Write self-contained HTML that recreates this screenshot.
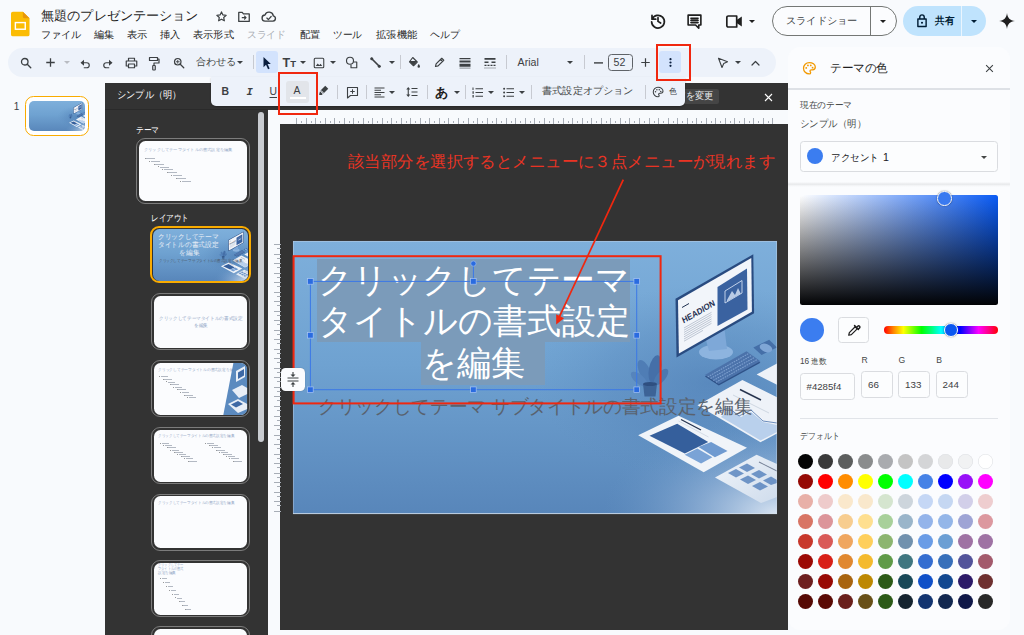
<!DOCTYPE html>
<html lang="ja">
<head>
<meta charset="utf-8">
<title>無題のプレゼンテーション - Google スライド</title>
<style>
*{box-sizing:border-box;margin:0;padding:0}
html,body{width:1024px;height:635px;overflow:hidden}
body{position:relative;background:#f8fafd;font-family:"Liberation Sans",sans-serif;color:#1f1f1f;font-size:10px}
.abs{position:absolute}
.t{position:absolute;white-space:nowrap;line-height:1}
.st text{font-family:"Liberation Sans",sans-serif}
svg{position:absolute;overflow:visible}
/* header */
#doc-title{left:40px;top:9px;font-size:13.2px;color:#1f1f1f}
.menu{top:30px;font-size:10.2px;color:#1f1f1f}
.menu.dis{color:#a9adb3}
/* toolbar */
#toolbar{left:7.5px;top:47.6px;width:768.5px;height:29.2px;border-radius:15px;background:#edf2fa}
.tsep{position:absolute;width:1px;height:14px;top:55px;background:#c7cad1}
.tsep2{position:absolute;width:1px;height:14px;top:85px;background:#c7cad1}
.ico{stroke:#3c4043;fill:none;stroke-width:1.3;stroke-linecap:round;stroke-linejoin:round}
.fil{fill:#3c4043;stroke:none}
.dd{position:absolute;width:0;height:0;border-left:3px solid transparent;border-right:3px solid transparent;border-top:3.2px solid #3c4043}
/* theme panel */
#tp{left:105px;top:83px;width:163px;height:552px;background:#333333}
#tphead{left:105px;top:82.800px;width:683px;height:26.800px;background:#333333}
.thumb{position:absolute;left:151.5px;width:98px;height:57px;border:1px solid #777;border-radius:9px}
.thumb i{position:absolute;left:1.5px;top:1.5px;right:1.5px;bottom:1.5px;background:#fbfcfe;border-radius:7px;overflow:hidden;display:block}
.tl{position:absolute;left:0;right:0;text-align:center;font-size:3.4px;color:#8fa3c0;line-height:4.2px;white-space:nowrap}
.bl{position:absolute;height:1px;background:#8b93a3;opacity:.75}
/* right panel */
#rp{left:788px;top:47px;width:222px;height:583px;background:#fbfcfe;border-radius:12px}
.box{position:absolute;border:1px solid #dadce0;border-radius:3px;background:#fcfdfe}
.sw{position:absolute;width:15.4px;height:15.4px;border-radius:50%}
.lbl{font-size:8.6px;color:#444746}
.val{font-size:9.8px;color:#3c4043}
</style>
</head>
<body>
<!--ART-->
<svg width="0" height="0" style="left:0;top:0">
<defs>
<linearGradient id="sbg" x1="0" y1="0" x2="0" y2="1">
  <stop offset="0" stop-color="#7eafdb"/><stop offset="0.45" stop-color="#6fa2d1"/><stop offset="1" stop-color="#5886ba"/>
</linearGradient>
<radialGradient id="sglow" cx="1" cy="1" r="0.36">
  <stop offset="0" stop-color="#dfe9f5" stop-opacity=".95"/><stop offset="0.5" stop-color="#a9c3e2" stop-opacity=".45"/><stop offset="1" stop-color="#6a98c9" stop-opacity="0"/>
</radialGradient>
<radialGradient id="sdesk" cx="0.86" cy="0.52" r="0.36">
  <stop offset="0" stop-color="#4a78b0" stop-opacity=".55"/><stop offset="0.6" stop-color="#4f7db4" stop-opacity=".25"/><stop offset="1" stop-color="#5b8abd" stop-opacity="0"/>
</radialGradient>
<linearGradient id="fadeR" x1="0" y1="0" x2="1" y2="1">
  <stop offset="0" stop-color="#f1f5fa"/><stop offset="1" stop-color="#cfdcec"/>
</linearGradient>
<symbol id="art" viewBox="0 0 484 273" preserveAspectRatio="none">
  <rect width="484" height="273" fill="url(#sbg)"/>
  <!-- darker desk zone on the right -->
  <rect width="484" height="273" fill="url(#sdesk)"/>
  <rect width="484" height="273" fill="url(#sglow)"/>
  <!-- plant -->
  <ellipse cx="352" cy="131" rx="5.500" ry="13" fill="#4f7db5" transform="rotate(-25 352 131)"/>
  <ellipse cx="362" cy="128" rx="6" ry="14" fill="#456fa8" transform="rotate(12 362 128)"/>
  <ellipse cx="346" cy="138" rx="4.500" ry="10" fill="#5684bc" transform="rotate(-50 346 138)"/>
  <ellipse cx="368" cy="136" rx="4.500" ry="10" fill="#4b78b0" transform="rotate(40 368 136)"/>
  <path d="M350 143h14l-1.500 12.500h-11z" fill="#3d6396"/>
  <ellipse cx="357" cy="143" rx="7" ry="2" fill="#2f4f80"/>
  <!-- monitor -->
  <ellipse cx="423" cy="111" rx="17" ry="7.500" fill="#8db4df"/>
  <polygon points="411,92 431,84 434,108 416,110" fill="#7ea8d8"/>
  <polygon points="382.500,57.800 460.300,13.200 461.100,72.300 383.500,116.500" fill="#294b80"/>
  <polygon points="385,59.300 458.300,17 458.900,70.800 385.900,112.600" fill="#f2f5fa"/>
  <polygon points="424.500,45.900 454,27.500 454.500,68.600 424.500,85" fill="#3a62a0"/>
  <polygon points="432,50 449,39.500 449,52 432,62" fill="none" stroke="#cfdcf0" stroke-width="0.900"/>
  <polygon points="434,59 439,50 442,54 445,47 448,53 448,52.500 434,60.500" fill="#b9cbe6"/>
  <g transform="translate(390.500,82.600) rotate(-30) skewX(-8)">
    <text x="0" y="0" font-family="Liberation Sans, sans-serif" font-weight="bold" font-size="8.500" fill="#1f3050" textLength="37" lengthAdjust="spacingAndGlyphs">HEADION</text>
  </g>
  <g stroke="#9aa6b8" stroke-width="0.600">
    <path d="M391 87L418.500 71.300M391 89.200L418.500 73.500M391 91.400L418.500 75.700M391 93.600L418.500 77.900M391 95.800L418.500 80.100M391 98L418.500 82.300M391 100.200L410 89.400"/>
  </g>
  <path d="M389 66.500l7-4" stroke="#1f3050" stroke-width="1"/>
  <!-- keyboard -->
  <polygon points="411.900,135.600 453.500,111.700 467.400,121.700 425.800,144.400" fill="#2f5288"/>
  <polygon points="411.900,134.100 453.500,110.200 467.400,120.200 425.800,142.900" fill="#4b72aa"/>
  <g stroke="#86a8d6" stroke-width="1.100" stroke-dasharray="1.6 0.9" opacity=".85">
    <path d="M414.700,135.900L456.300,112.200M417.500,137.600L459.100,114.200M420.300,139.400L461.900,116.200M423,141.200L464.600,118.200"/>
  </g>
  <!-- mouse -->
  <polygon points="460.300,106.400 476.200,98.800 484,106.400 468.600,113.900" fill="#456fa8"/>
  <ellipse cx="473" cy="107" rx="6.500" ry="4" fill="#7fa6d6" transform="rotate(20 473 107)"/>
  <!-- paper top right -->
  <polygon points="463.600,133.500 484,122.400 484,143.700" fill="#eef2f8"/>
  <!-- paper A (chart) -->
  <polygon points="449.400,139 404.500,164.200 467.500,201.200 484,192.500 484,156.300" fill="#eef2f8"/>
  <polygon points="436,168 448,176 458,171 470,181 484,184 484,191 467.500,199.500 440,183 428,176" fill="#b9d0ec"/>
  <path d="M424 171l12-4 10 8 12-6 12 11 14 2" stroke="#4a74ad" stroke-width="0.800" fill="none"/>
  <path d="M447 148.500l21 10.500" stroke="#27344f" stroke-width="1.400"/>
  <path d="M440 154l36 18" stroke="#b8c2d2" stroke-width="0.600"/>
  <!-- paper B (slide deck) -->
  <polygon points="385.500,174.700 345.200,194.300 410.700,231.300 454,206.700" fill="#f0f4f9"/>
  <polygon points="384.200,182.700 356.500,194.800 391.800,212.400 415.200,201.100" fill="#355f9c"/>
  <polygon points="405.500,206.100 418.100,201.100 434.500,209.900 421.900,216.200" fill="#6f9ad0"/>
  <polygon points="391.700,213.700 404.300,207.400 419.400,216.200 408.100,222.500" fill="#7aa3d6"/>
  <path d="M388 178.500l20 10.500" stroke="#27344f" stroke-width="1.300"/>
  <path d="M385.500 180l30 16" stroke="#b8c2d2" stroke-width="0.500"/>
  <!-- paper C (bottom right, faded) -->
  <polygon points="463.600,213.700 422,236.400 468,262 484,256 484,223" fill="url(#fadeR)"/>
  <g fill="#5b86bf" opacity=".85">
    <polygon points="446,226.500 454,222.500 462,227 454,231"/>
    <polygon points="435,232 443,228 451,232.500 443,236.500"/>
    <polygon points="458,233 466,229 474,233.500 466,237.500"/>
    <polygon points="447,238.500 455,234.500 463,239 455,243"/>
    <polygon points="470,239.500 478,235.500 484,239 484,242 478,244"/>
    <polygon points="459,245 467,241 475,245.500 467,249.500"/>
  </g>
  <path d="M466 221l18 9" stroke="#5b6880" stroke-width="1.100" opacity=".8"/>
</symbol>
</defs>
</svg>
<!--/ART-->
<!-- ===== Header ===== -->
<svg style="left:10.5px;top:10.5px" width="19" height="26" viewBox="0 0 20 27">
  <path d="M2 0.5H12.5L19.5 7.5V24.5a2 2 0 0 1-2 2H2a2 2 0 0 1-2-2V2.5a2 2 0 0 1 2-2z" fill="#fbbc04"/>
  <path d="M12.5 0.5L19.5 7.5H14.5a2 2 0 0 1-2-2z" fill="#e8960a"/>
  <rect x="4.6" y="12" width="10.4" height="7" fill="none" stroke="#fff" stroke-width="1.5"/>
</svg>
<svg class="st" style="left:40.5px;top:4.9px" width="157.5" height="19.8"><text x="0" y="14.8" font-size="13.2" fill="#1f1f1f" textLength="157.5" lengthAdjust="spacingAndGlyphs">無題のプレゼンテーション</text></svg>
<svg class="st" style="left:41.0px;top:26.5px" width="40.6" height="15.3"><text x="0" y="11.4" font-size="10.2" fill="#1f1f1f" textLength="40.6" lengthAdjust="spacingAndGlyphs">ファイル</text></svg>
<svg class="st" style="left:94.3px;top:26.5px" width="20.3" height="15.3"><text x="0" y="11.4" font-size="10.2" fill="#1f1f1f" textLength="20.3" lengthAdjust="spacingAndGlyphs">編集</text></svg>
<svg class="st" style="left:127.0px;top:26.5px" width="20.5" height="15.3"><text x="0" y="11.4" font-size="10.2" fill="#1f1f1f" textLength="20.5" lengthAdjust="spacingAndGlyphs">表示</text></svg>
<svg class="st" style="left:160.2px;top:26.5px" width="20.5" height="15.3"><text x="0" y="11.4" font-size="10.2" fill="#1f1f1f" textLength="20.5" lengthAdjust="spacingAndGlyphs">挿入</text></svg>
<svg class="st" style="left:193.2px;top:26.5px" width="40.8" height="15.3"><text x="0" y="11.4" font-size="10.2" fill="#1f1f1f" textLength="40.8" lengthAdjust="spacingAndGlyphs">表示形式</text></svg>
<svg class="st" style="left:247.3px;top:26.5px" width="38.9" height="15.3"><text x="0" y="11.4" font-size="10.2" fill="#a9adb3" textLength="38.9" lengthAdjust="spacingAndGlyphs">スライド</text></svg>
<svg class="st" style="left:299.8px;top:26.5px" width="20.6" height="15.3"><text x="0" y="11.4" font-size="10.2" fill="#1f1f1f" textLength="20.6" lengthAdjust="spacingAndGlyphs">配置</text></svg>
<svg class="st" style="left:333.3px;top:26.5px" width="29.2" height="15.3"><text x="0" y="11.4" font-size="10.2" fill="#1f1f1f" textLength="29.2" lengthAdjust="spacingAndGlyphs">ツール</text></svg>
<svg class="st" style="left:375.8px;top:26.5px" width="41.2" height="15.3"><text x="0" y="11.4" font-size="10.2" fill="#1f1f1f" textLength="41.2" lengthAdjust="spacingAndGlyphs">拡張機能</text></svg>
<svg class="st" style="left:429.8px;top:26.5px" width="29.7" height="15.3"><text x="0" y="11.4" font-size="10.2" fill="#1f1f1f" textLength="29.7" lengthAdjust="spacingAndGlyphs">ヘルプ</text></svg>
<!-- title icons -->
<svg style="left:214.500px;top:10px" width="13" height="13" viewBox="0 0 24 24"><path class="ico" style="stroke-width:2.2" d="M12 3.5l2.6 5.6 6 .7-4.5 4.1 1.2 6L12 16.9 6.700 19.900l1.200-6L3.400 9.800l6-.7z"/></svg>
<svg style="left:237px;top:10px" width="14" height="13" viewBox="0 0 24 22"><path class="ico" style="stroke-width:2.2" d="M3 4h6l2 2.500h10v13H3z"/><path class="ico" style="stroke-width:2" d="M9 13h6M13 10.500l2.500 2.500-2.500 2.500"/></svg>
<svg style="left:260.500px;top:10px" width="16" height="13" viewBox="0 0 26 20"><path class="ico" style="stroke-width:2.200" d="M7 17.500a5 5 0 0 1-.5-10A7 7 0 0 1 20 9a4.300 4.300 0 0 1-.5 8.500z"/><path class="ico" style="stroke-width:2" d="M9.500 12.500l2.500 2.500 4.500-5"/></svg>

<!-- header right -->
<svg style="left:649px;top:12px" width="18" height="18" viewBox="0 0 24 24"><path class="ico" style="stroke-width:2.300;stroke:#1f1f1f" d="M4.200 9.500A8.500 8.500 0 1 1 3.500 13M4 4.500v5h5M12 7.500v5l3.500 2.200"/></svg>
<svg style="left:686px;top:13px" width="17" height="17" viewBox="0 0 24 24"><path class="ico" style="stroke-width:2.300;stroke:#1f1f1f" d="M3 3h18v14H18v4.500L13.500 17H3zM7 7.500h10M7 10.500h10M7 13.500h10"/></svg>
<svg style="left:725px;top:14px" width="19" height="15" viewBox="0 0 26 20"><path class="ico" style="stroke-width:2.300;stroke:#1f1f1f" d="M4.500 2.500h11.500v15H4.500a2 2 0 0 1-2-2V4.500a2 2 0 0 1 2-2z"/><path d="M16 8l7-5v14l-7-5z" fill="#1f1f1f"/></svg>
<div class="dd" style="left:748.500px;top:20px;border-top-color:#1f1f1f"></div>

<div class="abs" style="left:772px;top:6px;width:125px;height:30px;border:1px solid #747775;border-radius:15px;background:#fbfcfe"></div>
<div class="abs" style="left:870px;top:7px;width:1px;height:28px;background:#747775"></div>
<div class="dd" style="left:879.500px;top:20px;border-top-color:#1f1f1f"></div>

<div class="abs" style="left:902.500px;top:6.300px;width:83.500px;height:29.500px;border-radius:15px;background:#bfe3fd"></div>
<div class="abs" style="left:961.200px;top:6px;width:1px;height:30px;background:#eaf5fe"></div>
<svg style="left:916px;top:13px" width="12" height="15" viewBox="0 0 16 20"><path class="ico" style="stroke-width:1.900;stroke:#001d35" d="M2.500 8h11v10h-11zM5 8V5.500a3 3 0 0 1 6 0V8"/><circle cx="8" cy="13" r="1.400" fill="#001d35"/></svg>
<div class="dd" style="left:970.500px;top:20px;border-top-color:#001d35"></div>
<svg style="left:999px;top:13px" width="16" height="16" viewBox="0 0 24 24"><path d="M12 0C12.800 7.500 16.500 11.200 24 12C16.500 12.800 12.800 16.500 12 24C11.200 16.500 7.500 12.800 0 12C7.500 11.200 11.200 7.500 12 0z" fill="#1f1f1f"/></svg>


<svg class="st" style="left:786.1px;top:12.7px" width="71.5" height="15.3"><text x="0" y="11.4" font-size="10.2" fill="#3c4043" textLength="71.5" lengthAdjust="spacingAndGlyphs">スライドショー</text></svg>
<svg class="st" style="left:934.5px;top:12.7px" width="19.1" height="15.3"><text x="0" y="11.4" font-size="10.2" fill="#001d35" font-weight="bold" textLength="19.1" lengthAdjust="spacingAndGlyphs">共有</text></svg>
<!-- ===== Toolbar ===== -->
<div id="toolbar" class="abs"></div>
<svg style="left:20.4px;top:56.5px" width="12" height="12" viewBox="0 0 24 24"><circle class="ico" style="stroke-width:2.6" cx="9.500" cy="9.500" r="6.500"/><path class="ico" style="stroke-width:2.800" d="M14.500 14.500L21.500 21.500"/></svg>
<svg style="left:46.3px;top:58.0px" width="9" height="9" viewBox="0 0 18 18"><path class="ico" style="stroke-width:2.600;stroke-linecap:butt" d="M9 0.500v17M0.500 9h17"/></svg>
<div class="dd" style="left:64.0px;top:60.9px;border-top-color:#b9bcc2"></div>
<svg style="left:79.5px;top:57.5px" width="11" height="11" viewBox="0 0 22 22"><path class="ico" style="stroke-width:2.400" d="M4.500 9.500h9a5 5 0 0 1 0 10h-5"/><path class="fil" d="M8 3.500v12L1 9.500z"/></svg>
<svg style="left:102.3px;top:57.5px" width="11" height="11" viewBox="0 0 22 22"><path class="ico" style="stroke-width:2.400" d="M17.500 9.500h-9a5 5 0 0 0 0 10h5"/><path class="fil" d="M14 3.500v12l7-6z"/></svg>
<svg style="left:124.9px;top:56.5px" width="13" height="12" viewBox="0 0 26 24"><path class="ico" style="stroke-width:2.400" d="M7 8V2.500h12V8M7 18H2.500V8h21v10H19M7 14h12v7.500H7z"/></svg>
<svg style="left:148.3px;top:55.5px" width="12" height="15" viewBox="0 0 24 30"><path class="ico" style="stroke-width:2.400" d="M3 3h16v6H3zM19 6h3v8H12v5"/><rect class="ico" style="stroke-width:2.400" x="9.500" y="19" width="5" height="9" rx="1"/></svg>
<svg style="left:172.7px;top:56.5px" width="12" height="12" viewBox="0 0 24 24"><circle class="ico" style="stroke-width:2.400" cx="9.500" cy="9.500" r="6.500"/><path class="ico" style="stroke-width:2.600" d="M14.500 14.500L21.500 21.500"/><path class="ico" style="stroke-width:1.800" d="M9.500 6.500v6M6.500 9.500h6"/></svg>
<svg class="st" style="left:195.5px;top:54.2px" width="40.5" height="15.3"><text x="0" y="11.4" font-size="10.2" fill="#444746" textLength="40.5" lengthAdjust="spacingAndGlyphs">合わせる</text></svg>
<div class="dd" style="left:237.0px;top:60.9px"></div>
<div class="tsep" style="left:252.5px"></div>
<div class="abs" style="left:256px;top:51px;width:22px;height:22px;border-radius:3px;background:#d3e3fd"></div>
<svg style="left:262.0px;top:55.8px" width="10" height="14" viewBox="0 0 14 20"><path d="M2 1.500L12.500 11.500H7.800L10.800 17.800L8.500 18.800L5.600 12.600L2 16z" fill="#0b1f3f"/></svg>
<div class="t" style="left:282.5px;top:56.5px;font-size:12.5px;font-weight:bold;color:#3c4043">T</div>
<div class="t" style="left:290.2px;top:59.2px;font-size:9.5px;font-weight:bold;color:#3c4043">T</div>
<div class="dd" style="left:299.5px;top:60.9px"></div>
<svg style="left:312.8px;top:56.5px" width="12" height="12" viewBox="0 0 24 24"><rect class="ico" style="stroke-width:2.200" x="2.500" y="2.500" width="19" height="19" rx="2"/><path class="fil" d="M5.500 18l4-5 3 3.500 2.500-3 3.500 4.500z"/></svg>
<div class="dd" style="left:329.8px;top:60.9px"></div>
<svg style="left:344.9px;top:56.0px" width="13" height="13" viewBox="0 0 26 26"><circle class="ico" style="stroke-width:2.300" cx="10" cy="9.500" r="7"/><path class="ico" style="stroke-width:2.300" d="M18 12h5.500v11.500H12V18"/></svg>
<svg style="left:370.3px;top:57.0px" width="11" height="11" viewBox="0 0 22 22"><path class="ico" style="stroke-width:3.400" d="M3 3L19 19"/><circle class="fil" cx="3.500" cy="3.500" r="3"/><circle class="fil" cx="18.500" cy="18.500" r="3"/></svg>
<div class="dd" style="left:389.4px;top:60.9px"></div>
<div class="tsep" style="left:400.0px"></div>
<svg style="left:408.1px;top:56.0px" width="13" height="13" viewBox="0 0 26 26"><path class="ico" style="stroke-width:2.300" d="M9.500 3l9 9-7.500 7.500-8-8zM4 11h13"/><path class="fil" d="M3.500 11.500h14l-6.500 7z"/><path class="fil" d="M21.500 16s2.500 3 2.500 4.800a2.500 2.500 0 0 1-5 0c0-1.800 2.500-4.800 2.500-4.800z"/></svg>
<svg style="left:434.1px;top:57.0px" width="11" height="11" viewBox="0 0 22 22"><path class="ico" style="stroke-width:2.300" d="M3 19l1.200-5.200L15.500 2.500l4 4L8.200 17.800zM13 5l4 4"/></svg>
<svg style="left:459.0px;top:57.0px" width="12" height="12" viewBox="0 0 24 24"><path class="fil" d="M1 2h22v2.500H1zM1 7h22v4H1zM1 13.500h22v6H1z"/><path d="M1 21h22v2.500H1z" fill="#9aa0a6"/></svg>
<svg style="left:484.2px;top:57.0px" width="12" height="12" viewBox="0 0 24 24"><path class="fil" d="M1 2h22v3.500H1zM1 9h8v3H1zM15 9h8v3h-8zM1 15.500h4v2.500H1zM7 15.500h4v2.500H7zM13 15.500h4v2.500h-4zM19 15.500h4v2.500h-4z"/><path d="M1 21h2v2H1zM5 21h2v2H5zM9 21h2v2H9zM13 21h2v2h-2zM17 21h2v2h-2zM21 21h2v2h-2z" fill="#5f6368"/></svg>
<div class="tsep" style="left:505.5px"></div>
<div class="t" style="left:517.6px;top:57.2px;font-size:10.6px;color:#3c4043">Arial</div>
<div class="dd" style="left:566.5px;top:60.9px"></div>
<div class="tsep" style="left:584.2px"></div>
<svg style="left:593.5px;top:61.5px" width="9" height="2" viewBox="0 0 9 2"><rect class="fil" x="0" y="0.200" width="9" height="1.400"/></svg>
<div class="abs" style="left:607.5px;top:53.500px;width:25px;height:17.500px;border:1px solid #5f6368;border-radius:3.500px"></div>
<div class="t" style="left:613.6px;top:57.2px;font-size:10.6px;color:#3c4043">52</div>
<svg style="left:640.8px;top:58.0px" width="9" height="9" viewBox="0 0 18 18"><path class="ico" style="stroke-width:2.400;stroke-linecap:butt" d="M9 0.500v17M0.500 9h17"/></svg>
<div class="abs" style="left:659.300px;top:51px;width:21.800px;height:22px;border-radius:3px;background:#d3e3fd"></div>
<svg style="left:668.9px;top:57.4px" width="3" height="11" viewBox="0 0 3 11"><circle cx="1.500" cy="2.200" r="1.100" fill="#0b1f3f"/><circle cx="1.500" cy="5.500" r="1.100" fill="#0b1f3f"/><circle cx="1.500" cy="8.800" r="1.100" fill="#0b1f3f"/></svg>
<svg style="left:716.6px;top:57.0px" width="12" height="12" viewBox="0 0 24 24"><path class="ico" style="stroke-width:2.200" d="M3 2.500L21 9.500L13.500 13L10 21z"/></svg>
<div class="dd" style="left:735.0px;top:61.4px"></div>
<svg style="left:751.0px;top:60.0px" width="9" height="6" viewBox="0 0 18 12"><path class="ico" style="stroke-width:2.400" d="M2 10L9 3l7 7"/></svg>
<!-- ===== Theme builder panel ===== -->
<div id="tphead" class="abs"></div>
<div id="tp" class="abs"></div>
<div class="abs" style="left:105px;top:109px;width:163px;height:1px;background:#2a2a2a"></div>
<div class="abs" style="left:258.2px;top:112px;width:6px;height:330px;background:#c9ccd1;border-radius:3px"></div>
<svg class="st" style="left:135.7px;top:122.6px" width="23.2" height="13.0"><text x="0" y="9.7" font-size="8.7" fill="#fff" textLength="23.2" lengthAdjust="spacingAndGlyphs">テーマ</text></svg>
<svg class="st" style="left:151.3px;top:211.0px" width="38.0" height="13.0"><text x="0" y="9.7" font-size="8.7" fill="#fff" textLength="38.0" lengthAdjust="spacingAndGlyphs">レイアウト</text></svg>
<div class="abs" style="left:136.4px;top:138.2px;width:113.2px;height:65.6px;border:1px solid #7c7c7c;border-radius:9px"></div>
<div class="abs" style="left:139px;top:140.9px;width:108.2px;height:60.2px;border-radius:6.5px;background:#fbfcfe;overflow:hidden"></div>
<svg class="st" style="left:144.0px;top:145.9px" width="88.4" height="6.6"><text x="0" y="4.9" font-size="4.4" fill="#93a7c6" textLength="88.4" lengthAdjust="spacingAndGlyphs">クリックしてテーマタイトルの書式設定を編集</text></svg>
<div class="abs" style="left:146.3px;top:158.0px;width:9px;height:0.9px;background:#6b7688;opacity:.5"></div>
<div class="abs" style="left:144.7px;top:157.9px;width:1px;height:1px;background:#555;opacity:.6"></div>
<div class="abs" style="left:150.7px;top:160.8px;width:9px;height:0.9px;background:#6b7688;opacity:.5"></div>
<div class="abs" style="left:149.1px;top:160.7px;width:1px;height:1px;background:#555;opacity:.6"></div>
<div class="abs" style="left:155.1px;top:163.6px;width:9px;height:0.9px;background:#6b7688;opacity:.5"></div>
<div class="abs" style="left:153.5px;top:163.5px;width:1px;height:1px;background:#555;opacity:.6"></div>
<div class="abs" style="left:159.5px;top:166.5px;width:9px;height:0.9px;background:#6b7688;opacity:.5"></div>
<div class="abs" style="left:157.9px;top:166.4px;width:1px;height:1px;background:#555;opacity:.6"></div>
<div class="abs" style="left:163.9px;top:169.3px;width:9px;height:0.9px;background:#6b7688;opacity:.5"></div>
<div class="abs" style="left:162.3px;top:169.2px;width:1px;height:1px;background:#555;opacity:.6"></div>
<div class="abs" style="left:168.3px;top:172.1px;width:9px;height:0.9px;background:#6b7688;opacity:.5"></div>
<div class="abs" style="left:166.7px;top:172.0px;width:1px;height:1px;background:#555;opacity:.6"></div>
<div class="abs" style="left:172.7px;top:174.9px;width:9px;height:0.9px;background:#6b7688;opacity:.5"></div>
<div class="abs" style="left:171.1px;top:174.8px;width:1px;height:1px;background:#555;opacity:.6"></div>
<div class="abs" style="left:177.1px;top:177.7px;width:9px;height:0.9px;background:#6b7688;opacity:.5"></div>
<div class="abs" style="left:175.5px;top:177.6px;width:1px;height:1px;background:#555;opacity:.6"></div>
<div class="abs" style="left:181.5px;top:180.6px;width:9px;height:0.9px;background:#6b7688;opacity:.5"></div>
<div class="abs" style="left:179.9px;top:180.5px;width:1px;height:1px;background:#555;opacity:.6"></div>
<div class="abs" style="left:150.3px;top:226.3px;width:100.6px;height:57.2px;border:2px solid #f9ab00;border-radius:9px"></div>
<div class="abs" style="left:153px;top:229px;width:95.2px;height:52.2px;border-radius:6.5px;overflow:hidden"><svg style="left:0;top:0" width="95.2" height="52.2"><use href="#art" width="95.2" height="52.2"/></svg></div>
<svg class="st" style="left:158.3px;top:230.9px" width="60.7" height="10.3"><text x="0" y="7.7" font-size="6.85" fill="#e6edf6" textLength="60.7" lengthAdjust="spacingAndGlyphs">クリックしてテーマ</text></svg>
<svg class="st" style="left:158.3px;top:239.1px" width="60.7" height="10.3"><text x="0" y="7.7" font-size="6.85" fill="#e6edf6" textLength="60.7" lengthAdjust="spacingAndGlyphs">タイトルの書式設定</text></svg>
<svg class="st" style="left:178.6px;top:247.3px" width="20.4" height="10.3"><text x="0" y="7.7" font-size="6.85" fill="#e6edf6" textLength="20.4" lengthAdjust="spacingAndGlyphs">を編集</text></svg>
<svg class="st" style="left:158.9px;top:258.3px" width="83.4" height="5.6"><text x="0" y="4.1" font-size="3.7" fill="#4d5a6b" textLength="83.4" lengthAdjust="spacingAndGlyphs">クリックしてテーマ サブタイトルの書式設定を編集</text></svg>
<div class="abs" style="left:151.4px;top:293.1px;width:98.4px;height:57.3px;border:1px solid #7c7c7c;border-radius:9px"></div>
<div class="abs" style="left:151.4px;top:360.1px;width:98.4px;height:57.3px;border:1px solid #7c7c7c;border-radius:9px"></div>
<div class="abs" style="left:151.4px;top:426.9px;width:98.4px;height:57.3px;border:1px solid #7c7c7c;border-radius:9px"></div>
<div class="abs" style="left:151.4px;top:493.7px;width:98.4px;height:57.3px;border:1px solid #7c7c7c;border-radius:9px"></div>
<div class="abs" style="left:151.4px;top:559.8px;width:98.4px;height:57.3px;border:1px solid #7c7c7c;border-radius:9px"></div>
<div class="abs" style="left:151.4px;top:626.4px;width:98.4px;height:57.3px;border:1px solid #7c7c7c;border-radius:9px"></div>
<div class="abs" style="left:153.9px;top:295.8px;width:93.3px;height:52.0px;border-radius:6.5px;background:#fbfcfe;overflow:hidden"></div>
<div class="abs" style="left:153.9px;top:362.8px;width:93.3px;height:52.0px;border-radius:6.5px;background:#fbfcfe;overflow:hidden"></div>
<div class="abs" style="left:153.9px;top:429.59999999999997px;width:93.3px;height:52.0px;border-radius:6.5px;background:#fbfcfe;overflow:hidden"></div>
<div class="abs" style="left:153.9px;top:496.4px;width:93.3px;height:52.0px;border-radius:6.5px;background:#fbfcfe;overflow:hidden"></div>
<div class="abs" style="left:153.9px;top:562.5px;width:93.3px;height:52.0px;border-radius:6.5px;background:#fbfcfe;overflow:hidden"></div>
<div class="abs" style="left:153.9px;top:629.1px;width:93.3px;height:52.0px;border-radius:6.5px;background:#fbfcfe;overflow:hidden"></div>
<svg class="st" style="left:158.5px;top:315.2px" width="83.6" height="7.0"><text x="0" y="5.2" font-size="4.65" fill="#93a7c6" textLength="83.6" lengthAdjust="spacingAndGlyphs">クリックしてテーマタイトルの書式設定</text></svg>
<svg class="st" style="left:193.5px;top:321.5px" width="14.0" height="7.0"><text x="0" y="5.2" font-size="4.65" fill="#93a7c6" textLength="14.0" lengthAdjust="spacingAndGlyphs">を編集</text></svg>
<svg class="st" style="left:157.7px;top:366.6px" width="75.3" height="5.8"><text x="0" y="4.4" font-size="3.9" fill="#93a7c6" textLength="75.3" lengthAdjust="spacingAndGlyphs">クリックしてテーマタイトルの書式設定を編</text></svg>
<div class="abs" style="left:160.6px;top:376.3px;width:7.5px;height:0.9px;background:#6b7688;opacity:.5"></div>
<div class="abs" style="left:159.0px;top:376.2px;width:1px;height:1px;background:#555;opacity:.6"></div>
<div class="abs" style="left:164.1px;top:378.9px;width:7.5px;height:0.9px;background:#6b7688;opacity:.5"></div>
<div class="abs" style="left:162.5px;top:378.8px;width:1px;height:1px;background:#555;opacity:.6"></div>
<div class="abs" style="left:167.6px;top:381.5px;width:7.5px;height:0.9px;background:#6b7688;opacity:.5"></div>
<div class="abs" style="left:166.0px;top:381.4px;width:1px;height:1px;background:#555;opacity:.6"></div>
<div class="abs" style="left:171.1px;top:384.2px;width:7.5px;height:0.9px;background:#6b7688;opacity:.5"></div>
<div class="abs" style="left:169.5px;top:384.1px;width:1px;height:1px;background:#555;opacity:.6"></div>
<div class="abs" style="left:174.6px;top:386.8px;width:7.5px;height:0.9px;background:#6b7688;opacity:.5"></div>
<div class="abs" style="left:173.0px;top:386.7px;width:1px;height:1px;background:#555;opacity:.6"></div>
<div class="abs" style="left:178.1px;top:389.4px;width:7.5px;height:0.9px;background:#6b7688;opacity:.5"></div>
<div class="abs" style="left:176.5px;top:389.3px;width:1px;height:1px;background:#555;opacity:.6"></div>
<div class="abs" style="left:181.6px;top:392.0px;width:7.5px;height:0.9px;background:#6b7688;opacity:.5"></div>
<div class="abs" style="left:180.0px;top:391.9px;width:1px;height:1px;background:#555;opacity:.6"></div>
<div class="abs" style="left:185.1px;top:394.6px;width:7.5px;height:0.9px;background:#6b7688;opacity:.5"></div>
<div class="abs" style="left:183.5px;top:394.5px;width:1px;height:1px;background:#555;opacity:.6"></div>
<div class="abs" style="left:188.6px;top:397.3px;width:7.5px;height:0.9px;background:#6b7688;opacity:.5"></div>
<div class="abs" style="left:187.0px;top:397.2px;width:1px;height:1px;background:#555;opacity:.6"></div>
<svg style="left:153.9px;top:362.8px" width="93.3" height="52"><defs><clipPath id="c3"><rect width="93.300" height="52" rx="6.500"/></clipPath></defs><g clip-path="url(#c3)"><polygon points="79.400,0 93.300,0 93.300,52 69.300,52" fill="#5b8abf"/><polygon points="82,8 91,3 91,14 82,19" fill="#e8eef7"/><polygon points="84,9.500 90,6 90,12.500 84,16" fill="#3d68a5"/><polygon points="78,27 88,22 93.300,25 93.300,31 85,35" fill="#e8eef7"/><polygon points="74,41 84,36 93.300,41 93.300,46 84,50" fill="#e8eef7"/><polygon points="77,41.500 84,38 89,41 82,44.500" fill="#3d68a5"/></g></svg>
<svg class="st" style="left:158.0px;top:433.0px" width="76.2" height="5.8"><text x="0" y="4.4" font-size="3.9" fill="#93a7c6" textLength="76.2" lengthAdjust="spacingAndGlyphs">クリックしてテーマタイトルの書式設定を編集</text></svg>
<div class="abs" style="left:161.5px;top:443.0px;width:7.5px;height:0.9px;background:#6b7688;opacity:.5"></div>
<div class="abs" style="left:159.9px;top:442.9px;width:1px;height:1px;background:#555;opacity:.6"></div>
<div class="abs" style="left:164.9px;top:445.2px;width:7.5px;height:0.9px;background:#6b7688;opacity:.5"></div>
<div class="abs" style="left:163.3px;top:445.1px;width:1px;height:1px;background:#555;opacity:.6"></div>
<div class="abs" style="left:168.4px;top:447.4px;width:7.5px;height:0.9px;background:#6b7688;opacity:.5"></div>
<div class="abs" style="left:166.8px;top:447.3px;width:1px;height:1px;background:#555;opacity:.6"></div>
<div class="abs" style="left:171.8px;top:449.6px;width:7.5px;height:0.9px;background:#6b7688;opacity:.5"></div>
<div class="abs" style="left:170.2px;top:449.5px;width:1px;height:1px;background:#555;opacity:.6"></div>
<div class="abs" style="left:175.3px;top:451.8px;width:7.5px;height:0.9px;background:#6b7688;opacity:.5"></div>
<div class="abs" style="left:173.7px;top:451.7px;width:1px;height:1px;background:#555;opacity:.6"></div>
<div class="abs" style="left:178.8px;top:454.0px;width:7.5px;height:0.9px;background:#6b7688;opacity:.5"></div>
<div class="abs" style="left:177.2px;top:453.9px;width:1px;height:1px;background:#555;opacity:.6"></div>
<div class="abs" style="left:182.2px;top:456.2px;width:7.5px;height:0.9px;background:#6b7688;opacity:.5"></div>
<div class="abs" style="left:180.6px;top:456.1px;width:1px;height:1px;background:#555;opacity:.6"></div>
<div class="abs" style="left:185.7px;top:458.4px;width:7.5px;height:0.9px;background:#6b7688;opacity:.5"></div>
<div class="abs" style="left:184.1px;top:458.3px;width:1px;height:1px;background:#555;opacity:.6"></div>
<div class="abs" style="left:189.1px;top:460.6px;width:7.5px;height:0.9px;background:#6b7688;opacity:.5"></div>
<div class="abs" style="left:187.5px;top:460.5px;width:1px;height:1px;background:#555;opacity:.6"></div>
<div class="abs" style="left:206.8px;top:443.0px;width:7.5px;height:0.9px;background:#6b7688;opacity:.5"></div>
<div class="abs" style="left:205.2px;top:442.9px;width:1px;height:1px;background:#555;opacity:.6"></div>
<div class="abs" style="left:210.2px;top:445.2px;width:7.5px;height:0.9px;background:#6b7688;opacity:.5"></div>
<div class="abs" style="left:208.7px;top:445.1px;width:1px;height:1px;background:#555;opacity:.6"></div>
<div class="abs" style="left:213.7px;top:447.4px;width:7.5px;height:0.9px;background:#6b7688;opacity:.5"></div>
<div class="abs" style="left:212.1px;top:447.3px;width:1px;height:1px;background:#555;opacity:.6"></div>
<div class="abs" style="left:217.2px;top:449.6px;width:7.5px;height:0.9px;background:#6b7688;opacity:.5"></div>
<div class="abs" style="left:215.6px;top:449.5px;width:1px;height:1px;background:#555;opacity:.6"></div>
<div class="abs" style="left:220.6px;top:451.8px;width:7.5px;height:0.9px;background:#6b7688;opacity:.5"></div>
<div class="abs" style="left:219.0px;top:451.7px;width:1px;height:1px;background:#555;opacity:.6"></div>
<div class="abs" style="left:224.1px;top:454.0px;width:7.5px;height:0.9px;background:#6b7688;opacity:.5"></div>
<div class="abs" style="left:222.5px;top:453.9px;width:1px;height:1px;background:#555;opacity:.6"></div>
<div class="abs" style="left:227.5px;top:456.2px;width:7.5px;height:0.9px;background:#6b7688;opacity:.5"></div>
<div class="abs" style="left:225.9px;top:456.1px;width:1px;height:1px;background:#555;opacity:.6"></div>
<div class="abs" style="left:231.0px;top:458.4px;width:7.5px;height:0.9px;background:#6b7688;opacity:.5"></div>
<div class="abs" style="left:229.4px;top:458.3px;width:1px;height:1px;background:#555;opacity:.6"></div>
<div class="abs" style="left:234.4px;top:460.6px;width:7.5px;height:0.9px;background:#6b7688;opacity:.5"></div>
<div class="abs" style="left:232.8px;top:460.5px;width:1px;height:1px;background:#555;opacity:.6"></div>
<svg class="st" style="left:158.0px;top:499.7px" width="76.2" height="5.8"><text x="0" y="4.4" font-size="3.9" fill="#93a7c6" textLength="76.2" lengthAdjust="spacingAndGlyphs">クリックしてテーマタイトルの書式設定を編集</text></svg>
<svg class="st" style="left:158.0px;top:561.8px" width="25.5" height="5.6"><text x="0" y="4.1" font-size="3.7" fill="#93a7c6" textLength="25.5" lengthAdjust="spacingAndGlyphs">クリックしてテー</text></svg>
<svg class="st" style="left:158.0px;top:565.9px" width="25.5" height="5.6"><text x="0" y="4.1" font-size="3.7" fill="#93a7c6" textLength="25.5" lengthAdjust="spacingAndGlyphs">マタイトルの書式</text></svg>
<svg class="st" style="left:158.0px;top:570.0px" width="18.0" height="5.6"><text x="0" y="4.1" font-size="3.7" fill="#93a7c6" textLength="18.0" lengthAdjust="spacingAndGlyphs">設定を編集</text></svg>
<div class="abs" style="left:161.5px;top:578.0px;width:5px;height:0.9px;background:#6b7688;opacity:.5"></div>
<div class="abs" style="left:159.9px;top:577.9px;width:1px;height:1px;background:#555;opacity:.6"></div>
<div class="abs" style="left:164.6px;top:581.9px;width:5px;height:0.9px;background:#6b7688;opacity:.5"></div>
<div class="abs" style="left:163.0px;top:581.8px;width:1px;height:1px;background:#555;opacity:.6"></div>
<div class="abs" style="left:167.7px;top:585.8px;width:5px;height:0.9px;background:#6b7688;opacity:.5"></div>
<div class="abs" style="left:166.1px;top:585.7px;width:1px;height:1px;background:#555;opacity:.6"></div>
<div class="abs" style="left:170.8px;top:589.7px;width:5px;height:0.9px;background:#6b7688;opacity:.5"></div>
<div class="abs" style="left:169.2px;top:589.6px;width:1px;height:1px;background:#555;opacity:.6"></div>
<div class="abs" style="left:173.9px;top:593.6px;width:5px;height:0.9px;background:#6b7688;opacity:.5"></div>
<div class="abs" style="left:172.3px;top:593.5px;width:1px;height:1px;background:#555;opacity:.6"></div>
<div class="abs" style="left:177.0px;top:597.5px;width:5px;height:0.9px;background:#6b7688;opacity:.5"></div>
<div class="abs" style="left:175.4px;top:597.4px;width:1px;height:1px;background:#555;opacity:.6"></div>
<div class="abs" style="left:180.1px;top:601.4px;width:5px;height:0.9px;background:#6b7688;opacity:.5"></div>
<div class="abs" style="left:178.5px;top:601.3px;width:1px;height:1px;background:#555;opacity:.6"></div>
<div class="abs" style="left:183.2px;top:605.3px;width:5px;height:0.9px;background:#6b7688;opacity:.5"></div>
<div class="abs" style="left:181.6px;top:605.2px;width:1px;height:1px;background:#555;opacity:.6"></div>
<div class="abs" style="left:186.3px;top:609.2px;width:5px;height:0.9px;background:#6b7688;opacity:.5"></div>
<div class="abs" style="left:184.7px;top:609.1px;width:1px;height:1px;background:#555;opacity:.6"></div>
<div class="t" style="left:13.8px;top:101.6px;font-size:10px;color:#3c4043">1</div>
<div class="abs" style="left:25px;top:96.4px;width:64.2px;height:39.3px;border:1.700px solid #f9ab00;border-radius:8.5px;background:#fff"></div>
<div class="abs" style="left:29px;top:100.8px;width:56.2px;height:30.6px;border-radius:5px;overflow:hidden"><svg style="left:0;top:0" width="56.2" height="30.6"><use href="#art" width="56.2" height="30.6"/></svg></div>
<!-- ===== Canvas ===== -->
<div class="abs" style="left:280.2px;top:124px;width:507.8px;height:506px;background:#333333"></div>
<svg style="left:293px;top:240.7px" width="484" height="273"><use href="#art" width="484" height="273"/><rect x="0.3" y="0.3" width="483.4" height="272.4" fill="none" stroke="#d5dfea" stroke-opacity=".55" stroke-width=".7"/><path d="M0 272.600H484" stroke="#d5dfea" stroke-opacity=".8" stroke-width=".9"/></svg>
<div class="abs" style="left:296.4px;top:118px;width:478px;height:5.5px;background:repeating-linear-gradient(90deg,#a7adb6 0 1px,transparent 1px 9.528px)"></div>
<div class="abs" style="left:301.16px;top:120.6px;width:472px;height:2.9px;background:repeating-linear-gradient(90deg,#a7adb6 0 1px,transparent 1px 9.528px)"></div>
<div class="abs" style="left:274px;top:243.6px;width:6.5px;height:270px;background:repeating-linear-gradient(180deg,#a7adb6 0 1px,transparent 1px 9.528px)"></div>
<div class="abs" style="left:277px;top:248.36px;width:3.5px;height:262px;background:repeating-linear-gradient(180deg,#a7adb6 0 1px,transparent 1px 9.528px)"></div>
<div class="abs" style="left:316.8px;top:259.3px;width:313.4px;height:83px;background:#7b9bba"></div>
<div class="abs" style="left:421px;top:342px;width:123.5px;height:42.6px;background:#7b9bba"></div>
<svg class="st" style="left:317.6px;top:252.8px" width="311.8" height="52.2"><text x="0" y="39.0" font-size="34.8" fill="#fff" textLength="311.8" lengthAdjust="spacingAndGlyphs">クリックしてテーマ</text></svg>
<svg class="st" style="left:317.6px;top:294.2px" width="311.8" height="52.2"><text x="0" y="39.0" font-size="34.8" fill="#fff" textLength="311.8" lengthAdjust="spacingAndGlyphs">タイトルの書式設定</text></svg>
<svg class="st" style="left:421.8px;top:335.6px" width="103.2" height="52.2"><text x="0" y="39.0" font-size="34.8" fill="#fff" textLength="103.2" lengthAdjust="spacingAndGlyphs">を編集</text></svg>
<svg class="st" style="left:318.0px;top:391.9px" width="434.4" height="28.0"><text x="0" y="20.9" font-size="18.7" fill="#59626e" textLength="434.4" lengthAdjust="spacingAndGlyphs">クリックしてテーマ サブタイトルの書式設定を編集</text></svg>
<svg style="left:0;top:0" width="1024" height="635">
  <rect x="310.4" y="281.4" width="326.3" height="108.3" fill="none" stroke="#3b78e7" stroke-width="1"/>
  <path d="M473.4 281.4V264" stroke="#3b78e7" stroke-width="1"/>
  <circle cx="473.4" cy="263.6" r="2.6" fill="#2a6be0" stroke="#9fc0f5" stroke-width=".6"/>
  <g fill="#2a6be0" stroke="#a8c5f5" stroke-width=".7">
    <rect x="307.6" y="278.6" width="5.6" height="5.6"/><rect x="470.6" y="278.6" width="5.6" height="5.6"/><rect x="633.9" y="278.6" width="5.6" height="5.6"/>
    <rect x="307.6" y="332.5" width="5.6" height="5.6"/><rect x="633.9" y="332.5" width="5.6" height="5.6"/>
    <rect x="307.6" y="386.9" width="5.6" height="5.6"/><rect x="470.6" y="386.9" width="5.6" height="5.6"/><rect x="633.9" y="386.9" width="5.6" height="5.6"/>
  </g>
  <rect x="293.6" y="256.2" width="367" height="147.2" fill="none" stroke="#f0270f" stroke-width="2"/>
  <path d="M623.300 179.600L559 317.600" stroke="#f0270f" stroke-width="1.7"/>
  <polygon points="556.200,324.600 556.200,314.200 564,318.300" fill="#f0270f"/>
</svg>
<svg class="st" style="left:347.6px;top:149.1px" width="427.1" height="24.6"><text x="0" y="18.4" font-size="16.4" fill="#ea3323" textLength="427.1" lengthAdjust="spacingAndGlyphs">該当部分を選択するとメニューに３点メニューが現れます</text></svg>
<div class="abs" style="left:281.2px;top:367.5px;width:23.6px;height:23.5px;border-radius:4.5px;background:#fbfcfe;box-shadow:0 0 1px rgba(0,0,0,.4)"></div>
<svg style="left:287px;top:372px" width="12" height="15" viewBox="0 0 12 15"><path d="M0.5 6h11M0.5 9h11" stroke="#3c4043" stroke-width="1.2"/><path d="M6 0v4M6 15v-4" stroke="#3c4043" stroke-width="1.1"/><path d="M3.5 2.5L6 5l2.5-2.5zM3.5 12.5L6 10l2.5 2.5z" fill="#3c4043"/></svg>
<svg class="st" style="left:117.2px;top:86.7px" width="64.4" height="15.3"><text x="0" y="11.4" font-size="10.2" fill="#fff" textLength="64.4" lengthAdjust="spacingAndGlyphs">シンプル（明）</text></svg>
<div class="abs" style="left:683px;top:89px;width:36px;height:15px;background:#454545;border-radius:2px"></div>
<svg class="st" style="left:666.8px;top:88.2px" width="46.5" height="15.3"><text x="0" y="11.4" font-size="10.2" fill="#e8eaed" textLength="46.5" lengthAdjust="spacingAndGlyphs">名前を変更</text></svg>
<svg style="left:763.5px;top:92.5px" width="9" height="9" viewBox="0 0 18 18"><path d="M2 2L16 16M16 2L2 16" stroke="#fff" stroke-width="2.200" fill="none"/></svg>
<div class="abs" style="left:211px;top:77px;width:474px;height:29.400px;background:#edf2fa;border-radius:0 0 5px 5px;box-shadow:0 1px 2px rgba(0,0,0,.25)"></div>
<div class="t" style="left:221.6px;top:87.3px;font-size:10.4px;font-weight:bold;color:#3c4043">B</div>
<div class="t" style="left:246.6px;top:87.3px;font-size:10.4px;font-weight:bold;font-style:italic;color:#3c4043;font-family:'Liberation Mono',monospace">I</div>
<div class="t" style="left:269.5px;top:87.1px;font-size:10.4px;color:#3c4043;text-decoration:underline;text-underline-offset:1.5px">U</div>
<div class="abs" style="left:286px;top:81px;width:23px;height:21.500px;border-radius:3px;background:#e2e5ea"></div>
<div class="t" style="left:293.6px;top:86.0px;font-size:10.4px;color:#3c4043">A</div>
<div class="abs" style="left:289.500px;top:96.600px;width:16px;height:2px;background:#fff"></div>
<svg style="left:317.9px;top:85.3px" width="11" height="11" viewBox="0 0 22 22"><path class="fil" d="M14.500 1.500l6 6-9.500 9.500-6-6z"/><path class="fil" d="M4 12.500l5.500 5.500-2 2H2.500v-2z" /><path d="M6.300 10.700l5 5" stroke="#edf2fa" stroke-width="1.400"/></svg>
<div class="tsep2" style="left:337.3px"></div>
<svg style="left:345.5px;top:85.8px" width="13" height="13" viewBox="0 0 26 26"><path class="ico" style="stroke-width:2.200" d="M3 3h20v16H9l-6 5z"/><path class="ico" style="stroke-width:2;stroke-linecap:butt" d="M13 6.500v9M8.500 11h9"/></svg>
<div class="tsep2" style="left:366.4px"></div>
<svg style="left:373.8px;top:86.5px" width="11" height="11" viewBox="0 0 22 22"><path class="ico" style="stroke-width:2;stroke-linecap:butt" d="M1 2h20M1 6.500h13M1 11h20M1 15.500h13M1 20h20"/></svg>
<div class="dd" style="left:389.4px;top:90.9px"></div>
<svg style="left:406.0px;top:87.0px" width="12" height="10" viewBox="0 0 24 20"><path class="ico" style="stroke-width:2.200;stroke-linecap:butt" d="M11 3h12M11 10h12M11 17h12M4.500 4v12"/><path class="fil" d="M4.500 0l4 5h-8zM4.500 20l4-5h-8z"/></svg>
<div class="tsep2" style="left:427.3px"></div>
<svg class="st" style="left:434.8px;top:81.6px" width="13.2" height="19.8"><text x="0" y="14.8" font-size="13.2" fill="#1f1f1f" font-weight="bold" textLength="13.2" lengthAdjust="spacingAndGlyphs">あ</text></svg>
<div class="dd" style="left:454.2px;top:90.9px"></div>
<div class="tsep2" style="left:465.0px"></div>
<svg style="left:472.2px;top:86.8px" width="11" height="11" viewBox="0 0 22 22"><path class="ico" style="stroke-width:2.200;stroke-linecap:butt" d="M7 3.500h15M7 11h15M7 18.500h15"/><path class="fil" d="M1 1h2v5H1zM1 8.500h2.500v5H1zM1 16h2.500v5H1z"/></svg>
<div class="dd" style="left:488.2px;top:90.9px"></div>
<svg style="left:502.5px;top:86.8px" width="11" height="11" viewBox="0 0 22 22"><path class="ico" style="stroke-width:2.200;stroke-linecap:butt" d="M7 3.500h15M7 11h15M7 18.500h15"/><circle class="fil" cx="2.200" cy="3.500" r="2"/><circle class="fil" cx="2.200" cy="11" r="2"/><circle class="fil" cx="2.200" cy="18.500" r="2"/></svg>
<div class="dd" style="left:518.5px;top:90.9px"></div>
<div class="tsep2" style="left:530.5px"></div>
<svg class="st" style="left:541.6px;top:83.4px" width="91.6" height="15.3"><text x="0" y="11.4" font-size="10.2" fill="#444746" textLength="91.6" lengthAdjust="spacingAndGlyphs">書式設定オプション</text></svg>
<div class="tsep2" style="left:644.5px"></div>
<svg style="left:651.6px;top:86.0px" width="12" height="12" viewBox="0 0 24 24"><path class="ico" style="stroke-width:2.100" d="M12 2.500a9.500 9.500 0 1 0 0 19c1.500 0 2.300-1 2.300-2.100 0-.7-.3-1.200-.6-1.600-.3-.4-.5-.8-.5-1.300 0-1.100.9-2 2-2H17.500a4.500 4.500 0 0 0 4.500-4.500C22 5.900 17.500 2.500 12 2.500z"/><circle class="fil" cx="7" cy="11.500" r="1.500"/><circle class="fil" cx="9.800" cy="7.300" r="1.500"/><circle class="fil" cx="14.500" cy="7.300" r="1.500"/><circle class="fil" cx="17.500" cy="11" r="1.500"/></svg>
<svg class="st" style="left:669.3px;top:85.4px" width="7.9" height="12.3"><text x="0" y="9.2" font-size="8.2" fill="#3c4043" textLength="7.9" lengthAdjust="spacingAndGlyphs">色</text></svg>
<div class="abs" style="left:277.800px;top:72px;width:40.200px;height:42.800px;border:2px solid #f0270f"></div>
<div class="abs" style="left:655.600px;top:43.600px;width:35.200px;height:37.200px;border:2px solid #f0270f"></div>
<!-- ===== Right panel ===== -->
<div id="rp" class="abs"></div>
<svg style="left:801.8px;top:61.2px" width="14.5" height="14.5" viewBox="0 0 24 24"><path d="M12 2.500a9.500 9.500 0 1 0 0 19c1.500 0 2.300-1 2.300-2.100 0-.7-.3-1.200-.6-1.600-.3-.4-.5-.8-.5-1.300 0-1.100.9-2 2-2H17.500a4.500 4.500 0 0 0 4.500-4.500C22 5.900 17.500 2.500 12 2.500z" fill="none" stroke="#f29900" stroke-width="2.100"/><circle fill="#f29900" cx="7" cy="11.500" r="1.500"/><circle fill="#f29900" cx="9.800" cy="7.300" r="1.500"/><circle fill="#f29900" cx="14.500" cy="7.300" r="1.500"/><circle fill="#f29900" cx="17.500" cy="11" r="1.500"/></svg>
<svg class="st" style="left:830.0px;top:59.1px" width="58.0" height="17.5"><text x="0" y="13.1" font-size="11.7" fill="#1f1f1f" textLength="58.0" lengthAdjust="spacingAndGlyphs">テーマの色</text></svg>
<svg style="left:984.5px;top:64.3px" width="9" height="9" viewBox="0 0 16 16"><path d="M2 2L14 14M14 2L2 14" stroke="#3c4043" stroke-width="1.900" fill="none"/></svg>
<div class="abs" style="left:788px;top:88.3px;width:222px;height:1.6px;background:#dee1e6"></div>
<svg class="st" style="left:800.0px;top:97.6px" width="52.0" height="13.0"><text x="0" y="9.7" font-size="8.7" fill="#444746" textLength="52.0" lengthAdjust="spacingAndGlyphs">現在のテーマ</text></svg>
<svg class="st" style="left:800.0px;top:116.2px" width="66.0" height="14.4"><text x="0" y="10.8" font-size="9.6" fill="#444746" textLength="66.0" lengthAdjust="spacingAndGlyphs">シンプル（明）</text></svg>
<div class="abs" style="left:800px;top:140.5px;width:197.5px;height:31px;border:1px solid #dadce0;border-radius:3.5px;background:#fcfdfe"></div>
<div class="abs" style="left:807px;top:148.1px;width:16.4px;height:16.4px;border-radius:50%;background:#3b7df0"></div>
<svg class="st" style="left:830.5px;top:148.7px" width="47.5" height="15.5"><text x="0" y="11.5" font-size="10.3" fill="#202124" textLength="47.5" lengthAdjust="spacingAndGlyphs">アクセント</text></svg>
<div class="t" style="left:883.0px;top:151.7px;font-size:10.6px;color:#202124">1</div>
<div class="dd" style="left:981.0px;top:156.4px;border-top-color:#444746"></div>
<div class="abs" style="left:788px;top:182px;width:222px;height:5px;background:linear-gradient(180deg,rgba(0,0,0,0) 0,rgba(60,64,67,.10) 45%,rgba(60,64,67,.03) 75%,rgba(0,0,0,0) 100%)"></div>
<div class="abs" style="left:800px;top:194.8px;width:197.8px;height:109.8px;border-radius:2.5px;background:linear-gradient(180deg,rgba(0,0,0,0) 0,rgba(2,3,6,.5) 50%,#020305 100%),linear-gradient(90deg,#ffffff 0,#0a5bf5 100%)"></div>
<div class="abs" style="left:937.2px;top:191.4px;width:14.6px;height:14.6px;border-radius:50%;background:#3a7af0;border:1.7px solid #fff;box-shadow:0 0 1.5px rgba(0,0,0,.55)"></div>
<div class="abs" style="left:800px;top:318.2px;width:23.6px;height:23.6px;border-radius:50%;background:#3b7df0"></div>
<div class="abs" style="left:838.4px;top:317px;width:30.6px;height:26.4px;border:1px solid #dadce0;border-radius:3.5px;background:#fcfdfe"></div>
<svg style="left:846.7px;top:323.2px" width="14" height="14" viewBox="0 0 24 24"><path class="ico" style="stroke-width:2.100;stroke:#1f1f1f" d="M3 21l1-4.500L14 6.500l3.500 3.500L7.500 20z"/><path d="M13 4.500l6.500 6.500M16.200 7.800l2.300-2.300a2.100 2.100 0 0 1 3 3l-2.300 2.300" fill="none" stroke="#1f1f1f" stroke-width="2.600" stroke-linecap="round"/></svg>
<div class="abs" style="left:884.2px;top:326.3px;width:113.8px;height:7.6px;border-radius:4px;background:linear-gradient(90deg,#ff0000 0,#ff8000 8%,#ffff00 17%,#80ff00 25%,#00ff00 33%,#00ff80 42%,#00ffff 50%,#0080ff 58%,#0000ff 67%,#8000ff 75%,#ff00ff 83%,#ff0080 92%,#ff0000 100%)"></div>
<div class="abs" style="left:944.3px;top:323px;width:14px;height:14px;border-radius:50%;background:#0b57f0;border:1.2px solid #fff;box-shadow:0 0 1.5px rgba(0,0,0,.5)"></div>
<div class="t" style="left:800.0px;top:357.4px;font-size:8.3px;color:#444746">16</div>
<svg class="st" style="left:810.5px;top:354.8px" width="15.3" height="12.5"><text x="0" y="9.3" font-size="8.3" fill="#444746" textLength="15.3" lengthAdjust="spacingAndGlyphs">進数</text></svg>
<div class="t" style="left:861.4px;top:356.3px;font-size:8.6px;color:#444746">R</div>
<div class="t" style="left:898.5px;top:356.3px;font-size:8.6px;color:#444746">G</div>
<div class="t" style="left:936.2px;top:356.3px;font-size:8.6px;color:#444746">B</div>
<div class="abs" style="left:800px;top:373.2px;width:55px;height:26.5px;border:1px solid #dadce0;border-radius:3.5px;background:#fcfdfe"></div>
<div class="abs" style="left:861.2px;top:371px;width:31.4px;height:26.6px;border:1px solid #dadce0;border-radius:3.5px;background:#fcfdfe"></div>
<div class="abs" style="left:898.3px;top:371px;width:31.7px;height:26.6px;border:1px solid #dadce0;border-radius:3.5px;background:#fcfdfe"></div>
<div class="abs" style="left:936px;top:371px;width:31.5px;height:26.6px;border:1px solid #dadce0;border-radius:3.5px;background:#fcfdfe"></div>
<div class="t" style="left:806.6px;top:382.2px;font-size:9.6px;color:#3c4043">#4285f4</div>
<div class="t" style="left:868.0px;top:379.7px;font-size:9.8px;color:#3c4043">66</div>
<div class="t" style="left:905.0px;top:379.7px;font-size:9.8px;color:#3c4043">133</div>
<div class="t" style="left:942.6px;top:379.7px;font-size:9.8px;color:#3c4043">244</div>
<div class="abs" style="left:800px;top:418px;width:197.5px;height:1.2px;background:#e1e4e9"></div>
<svg class="st" style="left:800.0px;top:429.0px" width="39.4" height="13.0"><text x="0" y="9.7" font-size="8.7" fill="#444746" textLength="39.4" lengthAdjust="spacingAndGlyphs">デフォルト</text></svg>
<div class="sw" style="left:797.8px;top:454.0px;background:#050505"></div>
<div class="sw" style="left:817.8px;top:454.0px;background:#3a3a3a"></div>
<div class="sw" style="left:837.8px;top:454.0px;background:#5c5e5e"></div>
<div class="sw" style="left:857.9px;top:454.0px;background:#8a8c8d"></div>
<div class="sw" style="left:877.9px;top:454.0px;background:#a9abaf"></div>
<div class="sw" style="left:897.9px;top:454.0px;background:#c4c4c4"></div>
<div class="sw" style="left:917.9px;top:454.0px;background:#d4d5d7"></div>
<div class="sw" style="left:937.9px;top:454.0px;background:#e8e9ea;box-shadow:inset 0 0 0 .6px #dfe1e5"></div>
<div class="sw" style="left:958.0px;top:454.0px;background:#f1f2f3;box-shadow:inset 0 0 0 .6px #dfe1e5"></div>
<div class="sw" style="left:978.0px;top:454.0px;background:#ffffff;box-shadow:inset 0 0 0 .6px #dfe1e5"></div>
<div class="sw" style="left:797.8px;top:474.0px;background:#950a05"></div>
<div class="sw" style="left:817.8px;top:474.0px;background:#ff0000"></div>
<div class="sw" style="left:837.8px;top:474.0px;background:#ff8c00"></div>
<div class="sw" style="left:857.9px;top:474.0px;background:#ffff00"></div>
<div class="sw" style="left:877.9px;top:474.0px;background:#00ff00"></div>
<div class="sw" style="left:897.9px;top:474.0px;background:#00ffff"></div>
<div class="sw" style="left:917.9px;top:474.0px;background:#4682e6"></div>
<div class="sw" style="left:937.9px;top:474.0px;background:#0000ff"></div>
<div class="sw" style="left:958.0px;top:474.0px;background:#9810f8"></div>
<div class="sw" style="left:978.0px;top:474.0px;background:#ff00ff"></div>
<div class="sw" style="left:797.8px;top:494.0px;background:#e8b0a8"></div>
<div class="sw" style="left:817.8px;top:494.0px;background:#eecbcb"></div>
<div class="sw" style="left:837.8px;top:494.0px;background:#fae8cc"></div>
<div class="sw" style="left:857.9px;top:494.0px;background:#f9e8cc"></div>
<div class="sw" style="left:877.9px;top:494.0px;background:#d5e5cf"></div>
<div class="sw" style="left:897.9px;top:494.0px;background:#cdd5dc"></div>
<div class="sw" style="left:917.9px;top:494.0px;background:#c5d7f5"></div>
<div class="sw" style="left:937.9px;top:494.0px;background:#c5d7f2"></div>
<div class="sw" style="left:958.0px;top:494.0px;background:#d2cfe9"></div>
<div class="sw" style="left:978.0px;top:494.0px;background:#eecdcf"></div>
<div class="sw" style="left:797.8px;top:514.0px;background:#d87565"></div>
<div class="sw" style="left:817.8px;top:514.0px;background:#dc959a"></div>
<div class="sw" style="left:837.8px;top:514.0px;background:#f7cd90"></div>
<div class="sw" style="left:857.9px;top:514.0px;background:#fedf90"></div>
<div class="sw" style="left:877.9px;top:514.0px;background:#a8d09a"></div>
<div class="sw" style="left:897.9px;top:514.0px;background:#9ab5ca"></div>
<div class="sw" style="left:917.9px;top:514.0px;background:#94b4ea"></div>
<div class="sw" style="left:937.9px;top:514.0px;background:#94b6e8"></div>
<div class="sw" style="left:958.0px;top:514.0px;background:#9ea4d5"></div>
<div class="sw" style="left:978.0px;top:514.0px;background:#dc989f"></div>
<div class="sw" style="left:797.8px;top:534.0px;background:#c8382c"></div>
<div class="sw" style="left:817.8px;top:534.0px;background:#d95a58"></div>
<div class="sw" style="left:837.8px;top:534.0px;background:#efa660"></div>
<div class="sw" style="left:857.9px;top:534.0px;background:#fecf5c"></div>
<div class="sw" style="left:877.9px;top:534.0px;background:#8cb570"></div>
<div class="sw" style="left:897.9px;top:534.0px;background:#7191ae"></div>
<div class="sw" style="left:917.9px;top:534.0px;background:#6a9ce6"></div>
<div class="sw" style="left:937.9px;top:534.0px;background:#6c9fd4"></div>
<div class="sw" style="left:958.0px;top:534.0px;background:#9f72a4"></div>
<div class="sw" style="left:978.0px;top:534.0px;background:#9f72a4"></div>
<div class="sw" style="left:797.8px;top:554.0px;background:#9c0a05"></div>
<div class="sw" style="left:817.8px;top:554.0px;background:#d82018"></div>
<div class="sw" style="left:837.8px;top:554.0px;background:#e08830"></div>
<div class="sw" style="left:857.9px;top:554.0px;background:#f4ba2e"></div>
<div class="sw" style="left:877.9px;top:554.0px;background:#5f9a48"></div>
<div class="sw" style="left:897.9px;top:554.0px;background:#3f7680"></div>
<div class="sw" style="left:917.9px;top:554.0px;background:#356dd0"></div>
<div class="sw" style="left:937.9px;top:554.0px;background:#376fba"></div>
<div class="sw" style="left:958.0px;top:554.0px;background:#52539a"></div>
<div class="sw" style="left:978.0px;top:554.0px;background:#a35a6c"></div>
<div class="sw" style="left:797.8px;top:574.0px;background:#6e2020"></div>
<div class="sw" style="left:817.8px;top:574.0px;background:#980a05"></div>
<div class="sw" style="left:837.8px;top:574.0px;background:#a86410"></div>
<div class="sw" style="left:857.9px;top:574.0px;background:#bd8802"></div>
<div class="sw" style="left:877.9px;top:574.0px;background:#2c5a18"></div>
<div class="sw" style="left:897.9px;top:574.0px;background:#184858"></div>
<div class="sw" style="left:917.9px;top:574.0px;background:#1050c8"></div>
<div class="sw" style="left:937.9px;top:574.0px;background:#124890"></div>
<div class="sw" style="left:958.0px;top:574.0px;background:#2c1a68"></div>
<div class="sw" style="left:978.0px;top:574.0px;background:#6e3030"></div>
<div class="sw" style="left:797.8px;top:594.0px;background:#560a05"></div>
<div class="sw" style="left:817.8px;top:594.0px;background:#5a0a05"></div>
<div class="sw" style="left:837.8px;top:594.0px;background:#6a201c"></div>
<div class="sw" style="left:857.9px;top:594.0px;background:#685018"></div>
<div class="sw" style="left:877.9px;top:594.0px;background:#2c5a18"></div>
<div class="sw" style="left:897.9px;top:594.0px;background:#152430"></div>
<div class="sw" style="left:917.9px;top:594.0px;background:#123470"></div>
<div class="sw" style="left:937.9px;top:594.0px;background:#122850"></div>
<div class="sw" style="left:958.0px;top:594.0px;background:#101848"></div>
<div class="sw" style="left:978.0px;top:594.0px;background:#282828"></div>
</body>
</html>
